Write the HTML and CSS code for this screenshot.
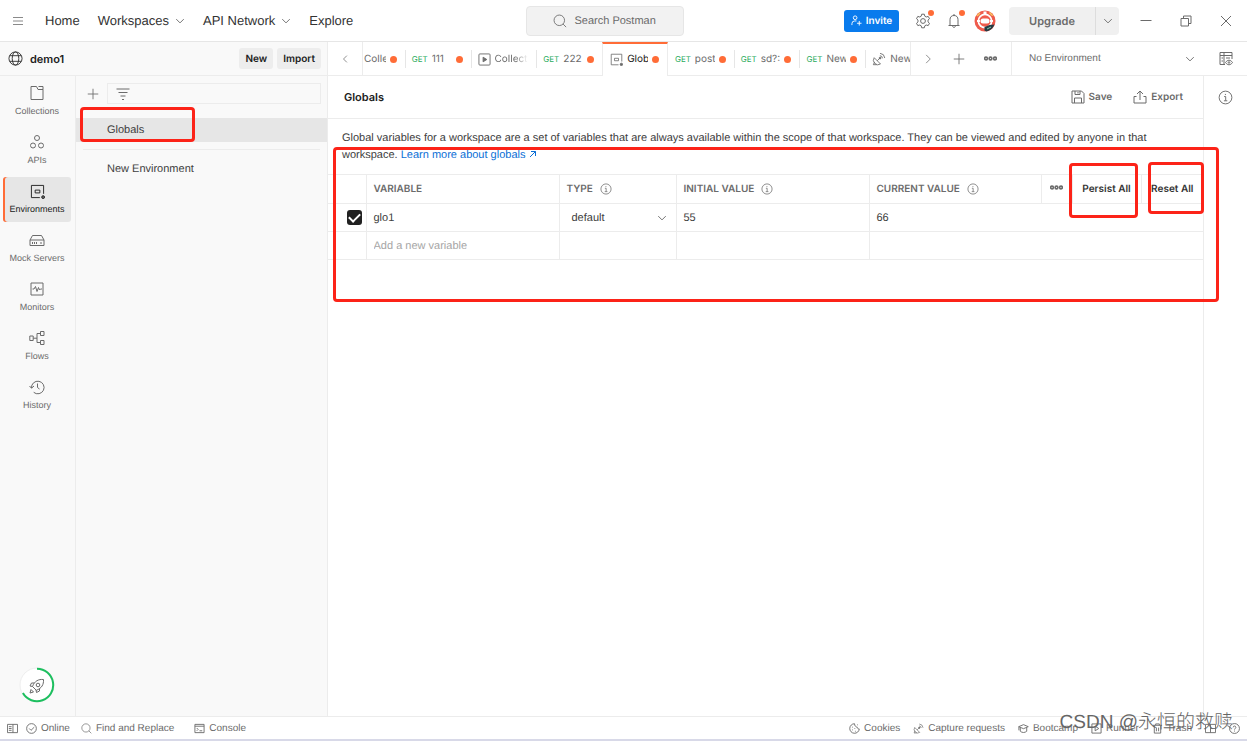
FILE: index.html
```html
<!DOCTYPE html>
<html lang="en">
<head>
<meta charset="utf-8">
<title>Globals - Postman</title>
<link rel="stylesheet" href="styles.css">
</head>
<body>
<svg class="sprite" aria-hidden="true">
  <symbol id="chevron-down" viewBox="0 0 16 16"><path d="M2 5l6 6 6-6"/></symbol>
  <symbol id="chevron-left" viewBox="0 0 16 16"><path d="M10.500 3.500L6 8l4.500 4.500"/></symbol>
  <symbol id="chevron-right" viewBox="0 0 16 16"><path d="M5.500 2.500L11 8l-5.500 5.500"/></symbol>
  <symbol id="plus" viewBox="0 0 16 16"><path d="M8 2v12M2 8h12"/></symbol>
  <symbol id="dots" viewBox="0 0 16 16"><circle cx="2.500" cy="8" r="1.700"/><circle cx="8" cy="8" r="1.700"/><circle cx="13.500" cy="8" r="1.700"/></symbol>
  <symbol id="search" viewBox="0 0 16 16"><circle cx="7.200" cy="7.200" r="6"/><path d="M11.500 11.500L15 15"/></symbol>
  <symbol id="info" viewBox="0 0 16 16"><circle cx="8" cy="8" r="6.800"/><path d="M6.500 7h1.700v4.300M6.300 11.500h3.600M7.900 4.200v1.200"/></symbol>
  <symbol id="env" viewBox="0 0 16 16"><path d="M10.500 14.500h-9v-13h13v9M5.500 6.500h5v3h-5z"/><circle class="solid" cx="14" cy="14" r="1.500"/></symbol>
  <symbol id="dish" viewBox="0 0 16 16"><path d="M2.500 6.500a5.200 5.200 0 0 0 7.200 7.200zM6 10l3-3M3 11.500l-1.500 3h4M9 4.200a3.300 3.300 0 0 1 3 3M9.200 1.500a6 6 0 0 1 5.400 5.400"/><circle class="solid" cx="9.200" cy="6.900" r="1"/></symbol>
</svg>
<div class="app">
  <header class="topbar">
    <nav class="topnav">
      <button class="plain menu" aria-label="Menu"><svg class="icon i12" viewBox="0 0 12 12"><path d="M1 2.500h10M1 6h10M1 9.500h10"/></svg></button>
      <a href="#" class="navlink">Home</a>
      <button class="plain navlink">Workspaces<svg class="icon i10"><use href="#chevron-down"/></svg></button>
      <button class="plain navlink">API Network<svg class="icon i10"><use href="#chevron-down"/></svg></button>
      <a href="#" class="navlink">Explore</a>
    </nav>
    <button class="search"><svg class="icon i14"><use href="#search"/></svg>Search Postman</button>
    <div class="actions">
      <button class="invite"><svg class="icon i11" viewBox="0 0 12 12"><circle cx="4.500" cy="3" r="2"/><path d="M1 11V9.500a3 3 0 0 1 3-3h2M9 6.500v5M6.500 9h5"/></svg>Invite</button>
      <button class="plain badge" aria-label="Settings"><svg class="icon i16" viewBox="0 0 16 16"><path d="M6.700 1.200h2.600l.5 2 1.400.8 2-.6 1.300 2.300-1.500 1.400v1.800l1.500 1.400-1.300 2.300-2-.6-1.400.8-.5 2H6.700l-.5-2-1.400-.8-2 .6-1.300-2.300L3 8.900V7.100L1.500 5.700l1.300-2.300 2 .6 1.400-.8z"/><circle cx="8" cy="8" r="2.400"/></svg></button>
      <button class="plain badge bell" aria-label="Notifications"><svg class="icon i16" viewBox="0 0 16 16"><path d="M2.500 12.500h11M4 12.500V6.700C4 4 5.500 2.500 8 2.500s4 1.500 4 4.200v5.800M6.500 12.500c0 2.500 3 2.500 3 0M8 1v1.500"/></svg></button>
      <button class="plain avatar" aria-label="Account"><svg viewBox="0 0 22 22" width="22" height="22"><circle cx="11" cy="11" r="10.500" fill="#ef5b4c"/><path d="M2.500 5.500l3-3 1 1-3 3zM16 2l3.500 3.500-1.500.5-3-3z" fill="#f7c65c"/><circle cx="11" cy="11" r="7.500" fill="#fff"/><path d="M11 1.500v3" stroke="#fff" stroke-width="3"/><circle cx="11" cy="11" r="5.800" fill="#ef5b4c"/><rect x="6.500" y="8.500" width="9" height="5" rx="2.500" fill="#fff"/><path d="M3 11h3M16 11h3" stroke="#fff" stroke-width="2"/><path d="M10.500 17l5-2 5-.5a11 11 0 0 1-8 7l-2-1z" fill="#253c45"/><path d="M13 19l4-2" stroke="#8ca" stroke-width="1"/></svg></button>
      <div class="upgrade"><button>Upgrade</button><button aria-label="Upgrade options"><svg class="icon i10"><use href="#chevron-down"/></svg></button></div>
      <button class="plain win" aria-label="Minimize"><svg class="icon i12" viewBox="0 0 12 12"><path d="M.5 5.500h11"/></svg></button>
      <button class="plain win" aria-label="Restore"><svg class="icon i12" viewBox="0 0 12 12"><path d="M1 3.500h7.500V11H1zM3.500 3.500V1H11v7.500H8.500"/></svg></button>
      <button class="plain win" aria-label="Close"><svg class="icon i12" viewBox="0 0 12 12"><path d="M1 1l10 10M11 1L1 11"/></svg></button>
    </div>
  </header>

  <div class="subbar">
    <div class="workspace">
      <svg class="icon i15 dark" viewBox="0 0 16 16"><circle cx="8" cy="8" r="7"/><ellipse cx="8" cy="8" rx="3.500" ry="7"/><path d="M2 5h12M2 11h12"/></svg>
      <strong>demo1</strong>
      <button class="chip">New</button>
      <button class="chip">Import</button>
    </div>
    <button class="plain tabnav back" aria-label="Scroll tabs left"><svg class="icon i12"><use href="#chevron-left"/></svg></button>
    <div class="tabs">
      <button class="tab first"><span class="tabname">Colle</span><i class="dot"></i></button>
      <button class="tab"><span class="get">GET</span><span class="tabname">111</span><i class="dot"></i></button>
      <button class="tab"><svg class="icon i13" viewBox="0 0 14 14"><rect x="1" y="1" width="12" height="12" rx="1"/><path class="solid" d="M5.500 4.500L9.500 7l-4 2.500z"/></svg><span class="tabname fade">Collect</span></button>
      <button class="tab"><span class="get">GET</span><span class="tabname">222</span><i class="dot"></i></button>
      <button class="tab active"><svg class="icon i13"><use href="#env"/></svg><span class="tabname">Glob</span><i class="dot"></i></button>
      <button class="tab"><span class="get">GET</span><span class="tabname">post</span><i class="dot"></i></button>
      <button class="tab"><span class="get">GET</span><span class="tabname">sd?:</span><i class="dot"></i></button>
      <button class="tab"><span class="get">GET</span><span class="tabname">New</span><i class="dot"></i></button>
      <button class="tab last"><svg class="icon i14"><use href="#dish"/></svg><span class="tabname">New</span></button>
    </div>
    <div class="tabtools">
      <button class="plain" aria-label="Scroll tabs right"><svg class="icon i12"><use href="#chevron-right"/></svg></button>
      <button class="plain" aria-label="New tab"><svg class="icon i14"><use href="#plus"/></svg></button>
      <button class="plain" aria-label="Tab options"><svg class="icon i13 bold"><use href="#dots"/></svg></button>
    </div>
    <button class="envpick">No Environment<svg class="icon i10"><use href="#chevron-down"/></svg></button>
    <button class="plain quick" aria-label="Environment quick look"><svg class="icon i14" viewBox="0 0 14 14"><path d="M6 12.500H1v-12h12V7M1 3.500h12M5 .5v12M2.500 6h1.500M2.500 9h1.500M7 6h4M6.500 10.500c2-3 5-3 7 0-2 3-5 3-7 0z"/><circle cx="10" cy="10.500" r=".8"/></svg></button>
  </div>

  <div class="body">
    <nav class="rail">
      <a href="#" class="railitem"><svg class="icon i16" viewBox="0 0 16 16"><path d="M2 14.500v-13h5.500l1.500 3h5v10zM9.500 1.500H14v3"/></svg>Collections</a>
      <a href="#" class="railitem"><svg class="icon i16" viewBox="0 0 16 16"><circle cx="8" cy="4" r="2.500"/><circle cx="4" cy="11.500" r="2.500"/><circle cx="12" cy="11.500" r="2.500"/></svg>APIs</a>
      <a href="#" class="railitem current"><svg class="icon i15"><use href="#env"/></svg>Environments</a>
      <a href="#" class="railitem"><svg class="icon i16" viewBox="0 0 16 16"><path d="M1 8l2.500-4.500h9L15 8v5.500H1zM1 8h14M3.500 10v2M5.500 10v2M7.500 10v2M11 11h2"/></svg>Mock Servers</a>
      <a href="#" class="railitem"><svg class="icon i16" viewBox="0 0 16 16"><path d="M2 2h12v12H2zM3.500 8H5l1.500-2.500L8 10.500 9.500 6.500l1 2.500 1-1h1.500"/></svg>Monitors</a>
      <a href="#" class="railitem"><svg class="icon i16" viewBox="0 0 16 16"><path d="M.8 6h3.400v4.500H.8zM11.500 1.500h3.500v4h-3.500zM11.500 10.500h3.500v4h-3.500zM4.200 8.200H8M11.500 3.500H8v9h3.500"/></svg>Flows</a>
      <a href="#" class="railitem"><svg class="icon i16" viewBox="0 0 16 16"><path d="M2.500 9a6.300 6.300 0 1 1 2.200 4.300M.5 7l2 2.200L5 7M8.500 4.500v4l2 1.500"/></svg>History</a>
      <button class="plain rocket" aria-label="Setup progress"><svg width="36" height="36" viewBox="0 0 36 36" fill="none"><circle cx="18" cy="18" r="17" fill="#fff" stroke="#eee"/><path d="M18 1.800A16.200 16.200 0 1 1 3.900 26" stroke="#1dbf5f" stroke-width="2"/><g stroke="#6b6b6b"><path d="M24.500 12.500c-5-.5-9 1.500-11 7l3.800 3.800c5.500-2 7.500-5.800 7.200-10.800zM15 16h-2.500L11 19l2.500.5M20.500 21.500V24l-3 1.500-.5-2.500M11 26l1-3.500 2.500 2.500z"/><circle cx="19" cy="18" r="1.800"/></g></svg></button>
    </nav>
    <aside class="sidebar">
      <div class="filterrow">
        <button class="plain" aria-label="Create environment"><svg class="icon i14"><use href="#plus"/></svg></button>
        <label class="filter"><svg class="icon i14" viewBox="0 0 14 14"><path d="M.5 2h13M2.500 5.500h9M4.500 9h5M6 12.500h2"/></svg><input type="text" aria-label="Filter environments"></label>
      </div>
      <a href="#" class="entry selected">Globals</a>
      <hr class="rule">
      <a href="#" class="entry">New Environment</a>
      <div class="mark mark-globals"></div>
    </aside>
    <main class="main">
      <div class="titlebar">
        <h1>Globals</h1>
        <button class="plain act"><svg class="icon i14" viewBox="0 0 14 14"><path d="M1 1h9.500L13 3.500V13H1zM4 1v3.500h5V1M3.500 13V8h7v5M7 2v1.500"/></svg>Save</button>
        <button class="plain act"><svg class="icon i14" viewBox="0 0 14 14"><path d="M3.500 6.500H1V13h12V6.500h-2.500M7 10V1.200M4 4l3-3 3 3"/></svg>Export</button>
      </div>
      <p class="desc">Global variables for a workspace are a set of variables that are always available within the scope of that workspace. They can be viewed and edited by anyone in that workspace. <a href="#">Learn more about globals <svg class="icon i8" viewBox="0 0 8 8"><path d="M1 7l5.500-5.500M2 1.500h4.500V6"/></svg></a></p>
      <table class="vars">
        <colgroup><col class="c-check"><col class="c-wide"><col class="c-type"><col class="c-wide"><col><col class="c-more"><col class="c-persist"><col class="c-reset"></colgroup>
        <thead>
          <tr><th></th><th>VARIABLE</th><th>TYPE<svg class="icon i12 inf"><use href="#info"/></svg></th><th>INITIAL VALUE<svg class="icon i12 inf"><use href="#info"/></svg></th><th>CURRENT VALUE<svg class="icon i12 inf"><use href="#info"/></svg></th><th class="tool"><button class="plain" aria-label="Column options"><svg class="icon i13 bold"><use href="#dots"/></svg></button></th><th class="tool"><button class="plain bulk">Persist All</button></th><th class="tool"><button class="plain bulk">Reset All</button></th></tr>
        </thead>
        <tbody>
          <tr><td class="checkcell"><input type="checkbox" class="check" checked aria-label="Enable glo1"></td><td>glo1</td><td><button class="plain typepick">default<svg class="icon i10"><use href="#chevron-down"/></svg></button></td><td>55</td><td colspan="4">66</td></tr>
          <tr><td></td><td><input class="newvar" type="text" placeholder="Add a new variable" aria-label="Add a new variable"></td><td></td><td></td><td colspan="4"></td></tr>
        </tbody>
      </table>
      <div class="mark mark-table"></div>
      <div class="mark mark-persist"></div>
      <div class="mark mark-reset"></div>
    </main>
    <aside class="inforail"><button class="plain" aria-label="Info"><svg class="icon i15"><use href="#info"/></svg></button></aside>
  </div>

  <footer class="status">
    <button class="plain" aria-label="Toggle sidebar"><svg class="icon i11" viewBox="0 0 12 12"><path d="M.5 1.500h11v9H.5zM6.500 1.500v9M2 4h3M2 6h3M2 8h3"/></svg></button>
    <button class="plain online"><svg class="icon i11" viewBox="0 0 12 12"><circle cx="6" cy="6" r="5.300"/><path d="M3.500 6l2 2 3.500-3.500"/></svg>Online</button>
    <button class="plain find"><svg class="icon i11"><use href="#search"/></svg>Find and Replace</button>
    <button class="plain"><svg class="icon i11" viewBox="0 0 12 12"><path d="M1 1.500h10v9H1zM1 3.500h10M3 5.500L4.500 7 3 8.500M6 8.500h3"/></svg>Console</button>
    <div class="statusright">
      <button class="plain"><svg class="icon i11" viewBox="0 0 12 12"><path d="M6 .8a5.200 5.200 0 1 0 5.200 5.700C9.500 6.500 9 5.500 9 4.500 7.500 4.500 6 3 6 .8z"/><path d="M3.500 4.500h.8M3.500 7.500h.8M6 6h.8M6.500 9h.8M9 2h.8"/></svg>Cookies</button>
      <button class="plain"><svg class="icon i11"><use href="#dish"/></svg>Capture requests</button>
      <button class="plain"><svg class="icon i11" viewBox="0 0 12 12"><path d="M.8 4L6 1.800 11.200 4 6 6.200zM2.500 5v4c2 1.800 5 1.800 7 0V5M1 4v4"/></svg>Bootcamp</button>
      <button class="plain"><svg class="icon i11" viewBox="0 0 12 12"><path d="M1 1h10v10H1zM4.500 3.500v5l4-2.500z"/></svg>Runner</button>
      <button class="plain"><svg class="icon i11" viewBox="0 0 12 12"><path d="M1 2.500h10M4 2.500V1h4v1.500M2.500 2.500V11h7V2.500M4.800 5v4M7.200 5v4"/></svg>Trash</button>
      <button class="plain" aria-label="Layout"><svg class="icon i11" viewBox="0 0 12 12"><path d="M.5 1.500h11v9H.5zM6 1.500v9M6 6h5.500"/></svg></button>
      <button class="plain" aria-label="Help"><svg class="icon i11" viewBox="0 0 12 12"><circle cx="6" cy="6" r="5.400"/><path d="M4.500 4.800c0-2 3-2 3 0C7.500 6 6 6 6 7.200M6 8.300v1"/></svg></button>
    </div>
  </footer>
  <div class="watermark">CSDN @永恒的救赎</div>
</div>
</body>
</html>
```

FILE: styles.css
```css
* { box-sizing: border-box; }
body { margin: 0; font-family: "Liberation Sans", "Noto Sans CJK SC", sans-serif; font-size: 11px; color: #404040; background: #fff; text-rendering: geometricPrecision; }
a { color: inherit; text-decoration: none; }
button, input { font: inherit; color: inherit; text-rendering: inherit; }
button { cursor: pointer; }
.sprite { position: absolute; width: 0; height: 0; }
.plain { display: inline-flex; align-items: center; justify-content: center; padding: 0; border: 0; background: none; }
.icon { flex: none; fill: none; stroke: #6b6b6b; stroke-width: 1; }
.solid { fill: #6b6b6b; }
.dark { stroke: #333; }
.bold { stroke-width: 2; }
.i8 { width: 8px; height: 8px; }
.i10 { width: 10px; height: 10px; stroke-width: 1.500; }
.i11 { width: 11px; height: 11px; }
.i12 { width: 12px; height: 12px; }
.i13 { width: 13px; height: 13px; }
.i14 { width: 14px; height: 14px; }
.i15 { width: 15px; height: 15px; }
.i16 { width: 16px; height: 16px; }

/* Semibold interface labels and tab titles */
.invite, .upgrade, .workspace, .tabs, .titlebar, .vars th { font-family: Inter, sans-serif; }

.app { position: relative; display: flex; flex-direction: column; height: 100vh; border-bottom: 2px solid #d8d9e8; overflow: hidden; }

.topbar { display: flex; flex: none; align-items: center; justify-content: space-between; height: 42px; padding: 0 15px 0 12px; border-bottom: 1px solid #e6e6e6; }
.topnav { display: flex; align-items: center; gap: 18px; padding-right: 12px; font-size: 13px; color: #333; }
.menu { margin-right: 3px; }
.menu .icon { stroke: #8a8a8a; }
.navlink { gap: 6px; white-space: nowrap; }
.search { display: flex; align-items: center; justify-content: center; gap: 7px; width: 158px; height: 30px; border: 1px solid #e6e6e6; border-radius: 4px; background: #f2f2f2; color: #6b6b6b; }
.actions { display: flex; align-items: center; }
.invite { display: flex; align-items: center; justify-content: center; gap: 4px; width: 55px; height: 22px; padding: 0; border: 0; border-radius: 3px; background: #097bed; color: #fff; font-size: 10px; font-weight: 600; }
.invite .icon { stroke: #fff; }
.badge { position: relative; margin-left: 16px; }
.bell { margin-left: 15px; }
.badge::after { content: ""; position: absolute; top: -3px; right: -3px; width: 6px; height: 6px; border-radius: 50%; background: #ff6c37; }
.avatar { margin: 0 13px 0 12px; }
.upgrade { display: flex; height: 28px; margin-right: 21px; border-radius: 4px; background: #f0f0f0; overflow: hidden; }
.upgrade button { display: flex; align-items: center; justify-content: center; width: 86px; padding: 0; border: 0; background: none; font-size: 11px; font-weight: 600; color: #6b6b6b; }
.upgrade button + button { width: 24px; border-left: 1px solid #ddd; }
.win + .win { margin-left: 28px; }

.subbar { display: flex; flex: none; height: 34px; border-bottom: 1px solid #ececec; }
.workspace { display: flex; flex: none; align-items: center; width: 328px; padding: 0 6px 0 8px; border-right: 1px solid #ececec; background: #f9f9f9; color: #212121; }
.workspace strong { margin: 0 auto 0 7px; font-size: 11px; font-weight: 600; }
.chip { height: 21px; margin-left: 4px; padding: 0 6px; border: 0; border-radius: 3px; background: #ededed; font-size: 10px; font-weight: 600; }
.tabnav { flex: none; width: 35px; border-right: 1px solid #ececec; }
.tabs { display: flex; flex: 1 1 0; min-width: 0; overflow: hidden; margin-bottom: -1px; }
.tab { position: relative; display: flex; flex: 1 0 65px; align-items: center; gap: 4px; min-width: 0; height: 34px; padding: 0 8px 0 7px; border: 0; background: none; font-size: 10px; color: #6b6b6b; text-align: left; }
.tab + .tab::before { content: ""; position: absolute; left: 0; top: 8px; width: 1px; height: 18px; background: #e6e6e6; }
.tab.first { flex: 1 0 41px; padding-left: 1px; }
.tab.last { flex: 1 0 44px; padding-right: 0; }
.tab.active { border: solid #ececec; border-width: 2px 1px 0; border-top-color: #ff6c37; padding-bottom: 2px; background: #fff; color: #212121; }
.tab.active::before, .tab.active + .tab::before { display: none; }
.tabname { flex: 1; min-width: 0; overflow: hidden; white-space: nowrap; }
.fade { mask-image: linear-gradient(90deg, #000 60%, transparent); }
.get { font-size: 8px; color: #29ab5c; }
.dot { flex: none; width: 7px; height: 7px; border-radius: 50%; background: #ff6c37; }
.tabtools { display: flex; flex: none; align-items: center; justify-content: space-between; width: 102px; padding: 0 14px 0 11px; border: solid #ececec; border-width: 0 1px; }
.envpick { display: flex; flex: none; align-items: center; justify-content: space-between; width: 192px; padding: 0 9px 0 17px; border: 0; background: none; font-size: 10px; color: #6b6b6b; }
.quick { flex: none; width: 43px; }

.body { display: flex; flex: 1; min-height: 0; }
.rail { display: flex; flex: none; flex-direction: column; gap: 4px; width: 76px; padding: 3px 4px 13px 3px; border-right: 1px solid #ececec; background: #f9f9f9; color: #6b6b6b; font-size: 9px; }
.railitem { display: flex; flex: none; flex-direction: column; align-items: center; justify-content: flex-end; gap: 4px; height: 45px; padding-bottom: 7px; border-radius: 3px; white-space: nowrap; line-height: 12px; }
.railitem.current { box-shadow: inset 2px 0 #ff6c37; background: #e6e6e6; color: #212121; }
.railitem.current .icon { stroke: #212121; }
.rocket { margin: auto auto 0; }
.sidebar { position: relative; flex: none; width: 252px; border-right: 1px solid #ececec; background: #f9f9f9; }
.filterrow { display: flex; align-items: center; gap: 7px; padding: 7px 6px 14px 10px; }
.filter { display: flex; flex: 1; align-items: center; gap: 6px; height: 21px; padding: 0 8px; border: 1px solid #ececec; }
.filter input { flex: 1; min-width: 0; border: 0; outline: 0; background: none; }
.entry { display: block; padding: 0 31px; line-height: 24px; color: #404040; }
.selected { background: #e6e6e6; }
.rule { margin: 7px 7px; border: 0; border-top: 1px solid #ececec; }

.main { position: relative; flex: 1; min-width: 0; border-right: 1px solid #ececec; }
.titlebar { display: flex; align-items: center; gap: 21px; height: 43px; padding: 0 20px 0 16px; border-bottom: 1px solid #ececec; }
.titlebar h1 { margin: 0 auto 0 0; font-size: 11px; font-weight: 600; color: #212121; }
.act { gap: 4px; font-size: 10px; font-weight: 600; color: #6b6b6b; }
.desc { margin: 0; padding: 11px 14px 10px; line-height: 17px; }
.desc a { color: #0b6fd6; }
.desc .icon { stroke: #0b6fd6; }
.vars { width: 100%; table-layout: fixed; border-collapse: collapse; }
.vars th, .vars td { height: 28px; padding: 0 7px; border: 1px solid #ececec; text-align: left; white-space: nowrap; }
.vars th { height: 29px; }
.vars tr > :first-child { border-left: 0; }
.vars tr > :last-child { border-right: 0; }
.vars th { font-size: 10px; font-weight: 600; color: #6b6b6b; }
.vars th.tool { padding: 0; text-align: center; }
.c-check { width: 38px; }
.c-wide { width: 193px; }
.c-type { width: 117px; }
.c-more { width: 31px; }
.c-persist { width: 69px; }
.c-reset { width: 62px; }
.inf { margin-left: 7px; vertical-align: -3px; }
.bulk { font-size: 10px; font-weight: 600; color: #333; }
.vars td.checkcell { padding: 0 4px 0 0; text-align: right; }
.check { appearance: none; width: 15px; height: 15px; margin: 0; border-radius: 3px; background: #212121; vertical-align: middle; display: inline-grid; place-items: center; }
.check:checked::before { content: ""; width: 9px; height: 5px; margin-bottom: 3px; border: solid #fff; border-width: 0 0 2px 2px; transform: rotate(-45deg); }
.typepick { width: 100%; justify-content: space-between; padding: 0 2px 0 5px; }
.newvar { width: 100%; padding: 0; border: 0; outline: 0; background: none; }
.newvar::placeholder { color: #a6a6a6; }
.inforail { flex: none; width: 43px; padding-top: 14px; text-align: center; }

.status { display: flex; flex: none; align-items: center; height: 23px; padding: 0 7px; border-top: 1px solid #ececec; font-size: 10px; color: #6b6b6b; }
.status .plain { gap: 4px; white-space: nowrap; }
.online { margin: 0 11px 0 8px; }
.find { margin-right: 20px; }
.statusright { display: flex; gap: 13px; margin-left: auto; }

.mark { position: absolute; border: 3px solid #fc2318; border-radius: 4px; pointer-events: none; }
.mark-globals { left: 4px; top: 31px; width: 115px; height: 35px; }
.mark-table { left: 5px; right: -16px; top: 71px; height: 155px; z-index: 1; }
.mark-persist { right: 65px; top: 87px; width: 69px; height: 55px; }
.mark-reset { right: -1px; top: 86px; width: 56px; height: 52px; }
.watermark { position: absolute; right: 14px; bottom: 3px; font: 300 19px/26px "Liberation Sans", "Noto Sans CJK SC", sans-serif; color: #666; pointer-events: none; white-space: nowrap; }
```
